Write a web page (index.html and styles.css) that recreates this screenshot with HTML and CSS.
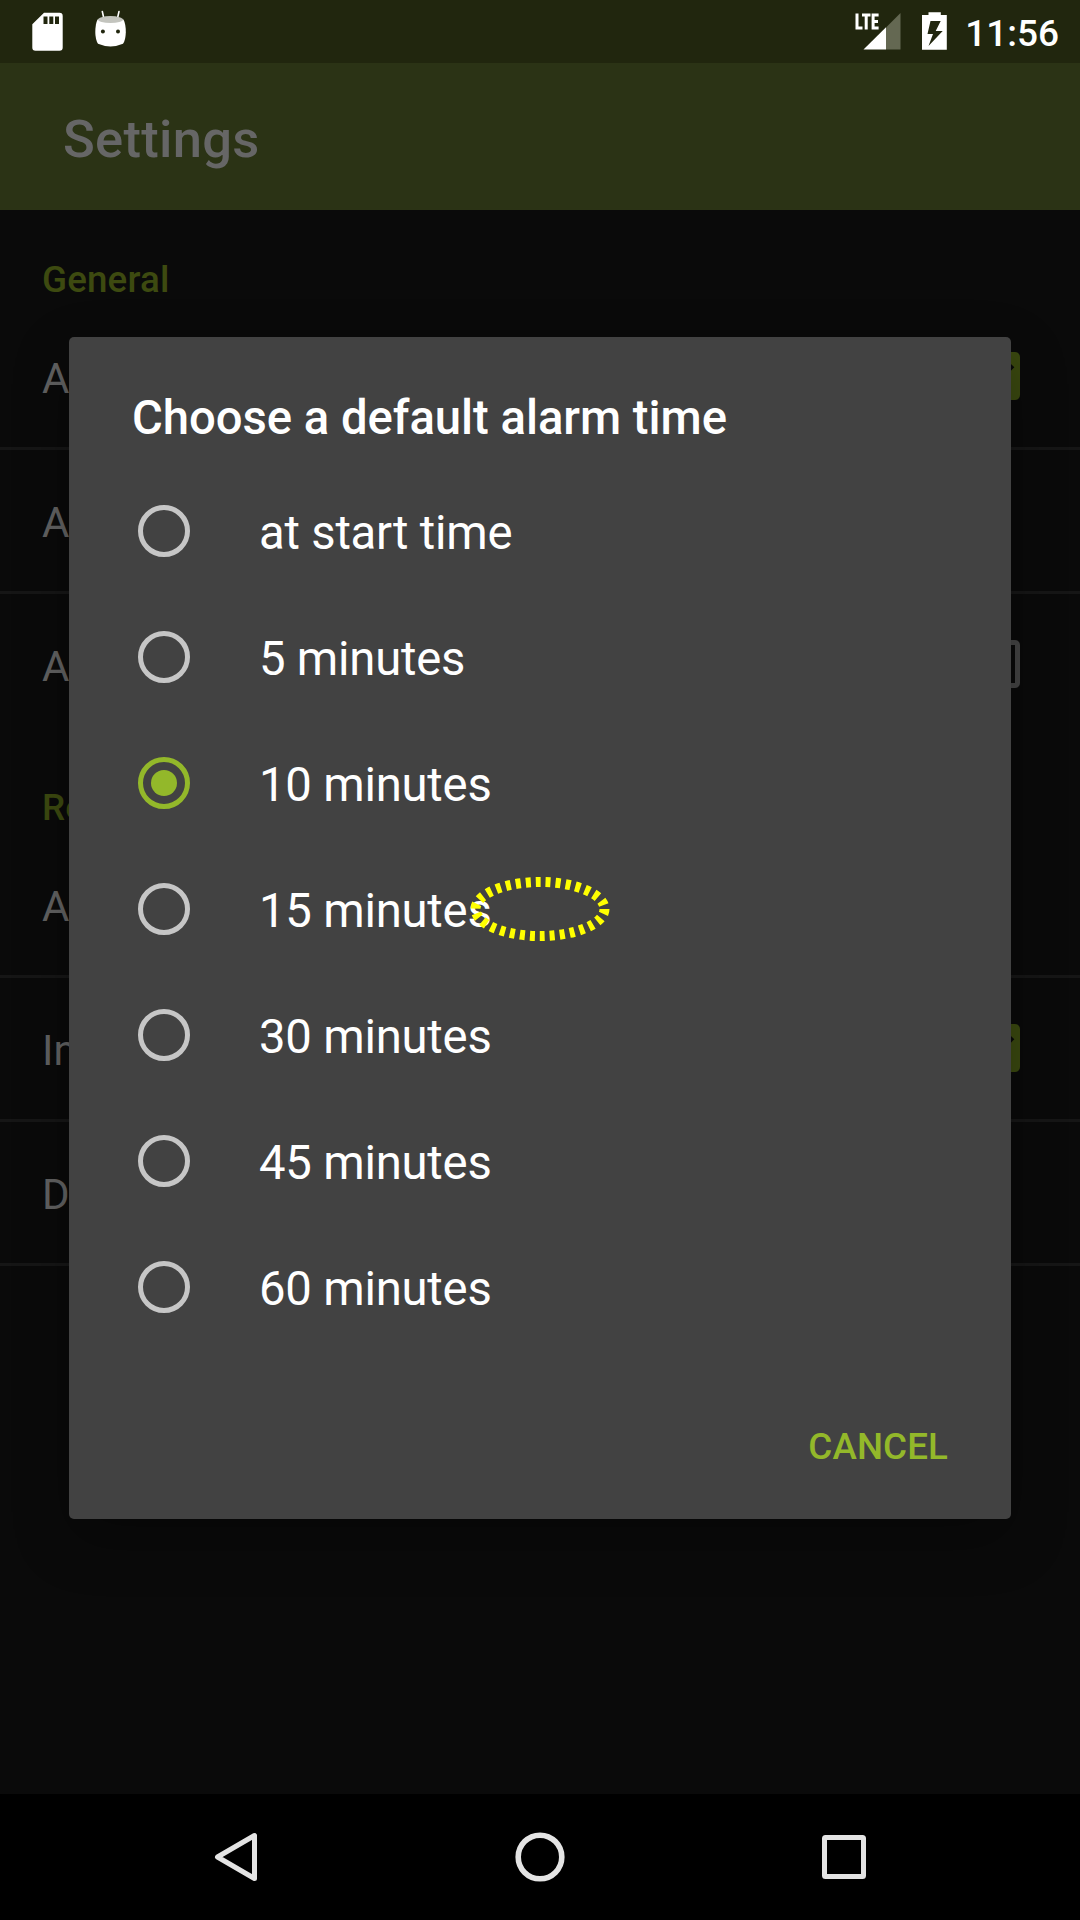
FILE: index.html
```html
<!DOCTYPE html>
<html lang="en">
<head>
<meta charset="utf-8">
<title>Settings</title>
<link rel="stylesheet" href="styles.css">
</head>
<body>
<div class="screen">
  <header class="status">
    <svg class="status-left" width="140" height="63" viewBox="0 0 140 63">
      <path fill="#fff" fill-rule="evenodd" d="M44 12.700h15.500q3.200 0 3.200 3.200v31.600q0 3.200-3.200 3.200h-24q-3.200 0-3.200-3.200V24.200zM43.500 16.500v7.500h4v-7.500zM49.300 16.500v7.500h4v-7.500zM55 16.500v7.500h4v-7.500z"/>
      <path stroke="#fff" stroke-width="1.600" stroke-linecap="round" d="M102.300 11.500l1.700 7.500M119 11.500l-1.700 7.500"/>
      <path fill="#fff" d="M97.500 19.500h26q2.500 5 2.300 13-.3 8-2.800 11.300-12.500 5.400-25 0-2.500-4-2.700-11.300 0-8.500 2.200-13z"/>
      <ellipse cx="110.500" cy="19.600" rx="12.600" ry="3.500" fill="#c3c4be"/>
      <circle cx="102.900" cy="31.400" r="2" fill="#21260e"/><circle cx="118" cy="31.400" r="2" fill="#21260e"/>
    </svg>
    <div class="status-right">
      <svg width="110" height="63" viewBox="850 0 110 63">
        <path fill="#fff" d="M855.500 13.500h3v13h4v3h-7zM862 13.500h8.500v3h-2.800v13h-3v-13H862zM871.600 13.500h7v3h-4v3.400h3.400v3h-3.400v3.600h4v3h-7z"/>
        <path fill="#646852" d="M900.500 13v36.500H886V27.500z"/>
        <path fill="#fff" d="M886 27.300v22.200h-22.500z"/>
        <path fill="#fff" fill-rule="evenodd" d="M928.500 12.200h12.300V15h6v34.700H922V15h6.500zM930.500 21l-3 13h5.500l-4.500 12 14.200-15h-7l5-10z"/>
      </svg>
      <span class="clock">11:56</span>
    </div>
  </header>
  <div class="toolbar">Settings</div>
  <main class="prefs">
    <h2>General</h2>
    <div class="row"><span>A</span><i class="check"><svg width="48" height="48" viewBox="0 0 48 48"><path d="M6 25l12 12 22.500-23.500" fill="none" stroke="#090909" stroke-width="5"/></svg></i></div>
    <div class="row"><span>A</span></div>
    <div class="row last"><span>A</span><i class="check empty"></i></div>
    <h2>Re</h2>
    <div class="row"><span>A</span></div>
    <div class="row"><span>In</span><i class="check"><svg width="48" height="48" viewBox="0 0 48 48"><path d="M6 25l12 12 22.500-23.500" fill="none" stroke="#090909" stroke-width="5"/></svg></i></div>
    <div class="row"><span>D</span></div>
  </main>
  <nav class="nav">
    <svg width="54" height="54" viewBox="0 0 54 54"><path d="M45.500 5.500v43L8.500 27z" fill="none" stroke="#e4e4e4" stroke-width="5" stroke-linejoin="round"/></svg>
    <svg width="54" height="54" viewBox="0 0 54 54"><circle cx="27" cy="27" r="21.800" fill="none" stroke="#e4e4e4" stroke-width="5.600"/></svg>
    <svg width="54" height="54" viewBox="0 0 54 54"><rect x="7.500" y="7.500" width="39" height="39" rx="1" fill="none" stroke="#e4e4e4" stroke-width="5"/></svg>
  </nav>

  <section class="dialog">
    <h1>Choose a default alarm time</h1>
    <div class="options">
      <div class="option"><i class="radio"></i><span>at start time</span></div>
      <div class="option"><i class="radio"></i><span>5 minutes</span></div>
      <div class="option"><i class="radio on"></i><span>10 minutes</span></div>
      <div class="option"><i class="radio"></i><span>15 minutes</span></div>
      <div class="option"><i class="radio"></i><span>30 minutes</span></div>
      <div class="option"><i class="radio"></i><span>45 minutes</span></div>
      <div class="option"><i class="radio"></i><span>60 minutes</span></div>
    </div>
    <div class="actions">CANCEL</div>
  </section>
  <svg class="marker" width="140" height="66" viewBox="0 0 140 66"><ellipse cx="70" cy="33" rx="64.500" ry="27" fill="none" stroke="#ff0" stroke-width="10" stroke-dasharray="5 5"/></svg>
</div>
</body>
</html>
```
FILE: styles.css
```css
* { box-sizing: border-box; }
body { margin: 0; font-family: Roboto, sans-serif; background: #0a0a0a; }
h1, h2 { margin: 0; font-weight: 500; }
svg { display: block; }
.screen { position: relative; width: 1080px; height: 1920px; display: flex; flex-direction: column; overflow: hidden; }

.status { height: 63px; background: #21260e; display: flex; justify-content: space-between; }
.status-right { display: flex; padding-right: 21px; }
.clock { width: 99px; font-size: 37px; font-weight: 500; line-height: 67px; color: #fff; text-align: right; white-space: nowrap; }
.toolbar { height: 147px; background: #2b3315; color: #666; font-size: 52.5px; font-weight: 500; line-height: 153px; letter-spacing: .3px; padding-left: 63px; }

.prefs { flex: 1; background: #0a0a0a; }
.prefs h2 { height: 96px; padding: 48px 0 0 42px; font-size: 36.75px; line-height: 43px; letter-spacing: .15px; color: #3d4a10; }
.row { height: 144px; padding: 0 60px 2px 42px; border-bottom: 3px solid #161616; display: flex; align-items: center; justify-content: space-between; font-size: 42px; color: #626262; }
.row span { padding-top: 6px; }
.row.last { border-bottom-color: transparent; }
.check { width: 48px; height: 48px; border-radius: 5px; background: #3a480f; }
.check.empty { background: none; border: 5px solid #444; }

.nav { height: 126px; background: #000; display: flex; justify-content: center; align-items: center; gap: 250px; }

.dialog { position: absolute; left: 69px; top: 337px; width: 942px; height: 1182px; padding: 53px 63px 0; border-radius: 5px; background: #424242; color: #fff; box-shadow: 0 20px 55px rgba(0, 0, 0, .3); display: flex; flex-direction: column; }
.dialog h1 { font-size: 47.25px; line-height: 56px; letter-spacing: -.04px; }
.options { margin-top: 22px; }
.option { height: 126px; padding-left: 6px; display: flex; align-items: center; gap: 69px; font-size: 47.25px; letter-spacing: -.22px; }
.option span { padding-top: 4px; }
.radio { width: 52px; height: 52px; border: 5px solid #c6c6c6; border-radius: 50%; display: flex; align-items: center; justify-content: center; }
.radio.on { border-color: #93b82a; }
.radio.on::after { content: ""; width: 26px; height: 26px; border-radius: 50%; background: #93b82a; }
.actions { margin-top: 75px; text-align: right; font-size: 36.75px; line-height: 43px; font-weight: 500; letter-spacing: .1px; color: #93b82a; }

.marker { position: absolute; left: 470px; top: 876px; }
```
